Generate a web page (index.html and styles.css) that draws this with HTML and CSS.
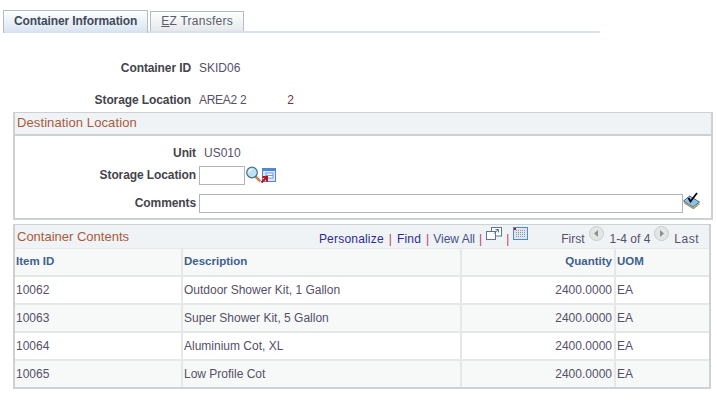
FILE: index.html
```html
<!DOCTYPE html>
<html lang="en">
<head>
    <meta charset="UTF-8">
    <title>Container Information</title>
    <link rel="stylesheet" href="styles.css">
</head>
<body>
    <div class="tabs">
        <div class="tab active">Container Information</div>
        <div class="tab"><u>E</u>Z Transfers</div>
    </div>

    <div class="info">
        <div class="row">
            <span class="label">Container ID</span>
            <span class="value">SKID06</span>
        </div>
        <div class="row">
            <span class="label">Storage Location</span>
            <span class="value area">AREA2 2</span>
            <span class="value extra">2</span>
        </div>
    </div>

    <div class="group">
        <div class="group-head">Destination Location</div>
        <div class="group-body">
            <div class="row unit-row">
                <span class="label">Unit</span>
                <span class="value unit">US010</span>
            </div>
            <div class="row loc-row">
                <span class="label">Storage Location</span>
                <input class="field short" type="text">
                <svg class="icon-search" width="15" height="16" viewBox="0 0 15 16">
                    <line x1="9" y1="10" x2="13.500" y2="14.500" stroke="#c98a4a" stroke-width="2.600" stroke-linecap="round"/>
                    <circle cx="6" cy="6.500" r="5.300" fill="#bfe0f2" stroke="#3f7390" stroke-width="1.200"/>
                    <path d="M3 6.500a3 3 0 0 1 3-3" fill="none" stroke="#fff" stroke-width="1.200"/>
                </svg>
                <svg class="icon-lookup" width="15" height="15" viewBox="0 0 15 15">
                    <rect x="1.500" y="0.500" width="13" height="13" fill="#dbe7f7" stroke="#4f86d6"/>
                    <rect x="2" y="1" width="12" height="2" fill="#4f86d6"/>
                    <rect x="5" y="5" width="7" height="5" fill="#fff" stroke="#6f9be0"/>
                    <line x1="5" y1="7.500" x2="12" y2="7.500" stroke="#6f9be0"/>
                    <path d="M0.500 14.500l4.500-4.500M1.500 9h4.500v4.500" fill="none" stroke="#c00d1e" stroke-width="2"/>
                </svg>
            </div>
            <div class="row comment-row">
                <span class="label">Comments</span>
                <input class="field long" type="text">
                <svg class="icon-spell" width="17" height="17" viewBox="0 0 17 17">
                    <path d="M0.500 9l6-5 10 6-6.500 5z" fill="#8fbfe6" stroke="#41688c"/>
                    <path d="M1 10.500l9.500 6 6-5" fill="none" stroke="#a89a6a" stroke-width="1.500"/>
                    <path d="M5.500 6l2 3.500L14 1" fill="none" stroke="#000" stroke-width="1.800"/>
                </svg>
            </div>
        </div>
    </div>

    <div class="grid-box">
        <div class="grid-head">
            <span class="grid-title">Container Contents</span>
            <div class="grid-nav">
                <a class="link">Personalize</a><span class="sep wide">|</span>
                <a class="link">Find</a><span class="sep find-sep">|</span>
                <a class="link viewall">View All</a><span class="sep">|</span>
                <svg class="icon-zoom" width="16" height="13" viewBox="0 0 16 13">
                    <rect x="5.500" y="0.500" width="10" height="8.500" fill="#fff" stroke="#5a7894"/>
                    <rect x="0.500" y="4.500" width="9" height="8" fill="#fff" stroke="#5a7894"/>
                    <path d="M8 6.500l4-3.500M9.500 2.500h3v3" fill="none" stroke="#5a7894"/>
                </svg>
                <span class="sep">|</span>
                <svg class="icon-dl" width="15" height="13" viewBox="0 0 15 13">
                    <rect x="0.500" y="0.500" width="14" height="12" fill="#dfe6f2" stroke="#4f86d6"/>
                    <path d="M3 3.500h10M3 5.500h10M3 7.500h10M3 9.500h10" stroke="#8c95a3" stroke-dasharray="1 1"/>
                    <rect x="1" y="1" width="2" height="2" fill="#c00d1e"/>
                </svg>
                <span class="first">First</span>
                <svg class="icon-nav" width="15" height="15" viewBox="0 0 15 15">
                    <circle cx="7.500" cy="7.500" r="7" fill="#e4e6e6" stroke="#c9cccc"/>
                    <path d="M9 4v7L5 7.500z" fill="#8a8f8f"/>
                </svg>
                <span class="count">1-4 of 4</span>
                <svg class="icon-nav" width="15" height="15" viewBox="0 0 15 15">
                    <circle cx="7.500" cy="7.500" r="7" fill="#e4e6e6" stroke="#c9cccc"/>
                    <path d="M6 4v7l4-3.500z" fill="#8a8f8f"/>
                </svg>
                <span class="last">Last</span>
            </div>
        </div>
        <table class="grid">
            <colgroup>
                <col class="col-id">
                <col class="col-desc">
                <col class="col-qty">
                <col class="col-uom">
            </colgroup>
            <thead>
                <tr>
                    <th>Item ID</th>
                    <th>Description</th>
                    <th class="num">Quantity</th>
                    <th>UOM</th>
                </tr>
            </thead>
            <tbody>
                <tr>
                    <td>10062</td>
                    <td>Outdoor Shower Kit, 1 Gallon</td>
                    <td class="num">2400.0000</td>
                    <td>EA</td>
                </tr>
                <tr>
                    <td>10063</td>
                    <td>Super Shower Kit, 5 Gallon</td>
                    <td class="num">2400.0000</td>
                    <td>EA</td>
                </tr>
                <tr>
                    <td>10064</td>
                    <td>Aluminium Cot, XL</td>
                    <td class="num">2400.0000</td>
                    <td>EA</td>
                </tr>
                <tr>
                    <td>10065</td>
                    <td>Low Profile Cot</td>
                    <td class="num">2400.0000</td>
                    <td>EA</td>
                </tr>
            </tbody>
        </table>
    </div>
</body>
</html>
```

FILE: styles.css
```css
body {
    font-family: "Liberation Sans", Arial, sans-serif;
    font-size: 12px;
    color: #55506a;
    background-color: #ffffff;
    margin: 0;
    overflow: hidden;
}

.tabs {
    display: flex;
    align-items: flex-end;
    width: 597px;
    height: 21px;
    margin: 10px 0 0 3px;
    border-bottom: 2px solid #d6e2f0;
}

.tab {
    height: 19px;
    line-height: 19px;
    padding: 0 10px;
    margin-right: 3px;
    border: 1px solid #b4bcc6;
    border-bottom: none;
    background: linear-gradient(#ffffff, #e6e8ea);
    color: #55606e;
    letter-spacing: 0.25px;
}

.tab.active {
    height: 22px;
    line-height: 21px;
    margin: 0 2px -2px 0;
    background: linear-gradient(#ffffff, #d6e2f0);
    color: #3f4a5c;
    font-weight: bold;
    letter-spacing: -0.1px;
}

.info {
    display: flex;
    flex-direction: column;
    gap: 12px;
    margin: 25px 0 2px;
}

.row {
    display: flex;
    align-items: center;
    height: 20px;
}

.label {
    width: 191px;
    margin-right: 8px;
    text-align: right;
    font-weight: bold;
    letter-spacing: -0.1px;
    color: #44444c;
    flex-shrink: 0;
}

.area {
    letter-spacing: -0.3px;
}

.extra {
    margin-left: 41px;
    color: #7a3040;
}

.group {
    width: 700px;
    height: 108px;
    margin-left: 13px;
    border: 2px solid #cdd1d4;
    border-top-width: 1px;
    box-sizing: border-box;
}

.group-head {
    height: 21px;
    line-height: 19px;
    padding-left: 2px;
    font-size: 13px;
    letter-spacing: 0.1px;
    background-color: #f0f3f5;
    border-bottom: 2px solid #cdd1d4;
    color: #a85a3c;
}

.group-body {
    padding-top: 7px;
}

.group-body .label {
    width: 181px;
    margin-right: 3px;
}

.unit {
    margin-left: 5px;
}

.loc-row {
    margin-top: 2px;
}

.comment-row {
    margin-top: 8px;
}

.field {
    height: 19px;
    padding: 0;
    margin: 0;
    border: 1px solid #b4b4b4;
    background-color: #ffffff;
    box-sizing: border-box;
}

.short {
    width: 46px;
}

.long {
    width: 484px;
}

.icon-search {
    margin: -2px 0 0 1px;
}

.icon-spell {
    margin-top: -5px;
}

.grid-box {
    width: 698px;
    margin: 4px 0 0 13px;
    border: 2px solid #cdd1d4;
    border-top-width: 1px;
    box-sizing: border-box;
}

.grid-head {
    display: flex;
    justify-content: space-between;
    align-items: center;
    height: 23px;
    padding-left: 2px;
    background-color: #f0f3f5;
}

.grid-title {
    font-size: 13px;
    color: #a85a3c;
}

.grid-nav {
    display: flex;
    align-items: center;
    padding: 4px 10px 0 0;
    color: #55506a;
}

.link {
    color: #2c2c94;
    letter-spacing: 0.2px;
}

.viewall {
    color: #45508a;
    letter-spacing: 0;
}

.sep {
    margin: 0 4px;
    color: #c03a6a;
}

.sep.wide {
    margin: 0 5px;
}

.sep.find-sep {
    margin: 0 4px 0 5px;
}

.first {
    margin: 0 4px 0 33px;
}

.count {
    margin: 0 4px 0 6px;
}

.last {
    margin-left: 5px;
    letter-spacing: 0.5px;
}

.icon-zoom,
.icon-dl,
.icon-nav {
    margin-top: -10px;
}

.grid {
    width: 100%;
    table-layout: fixed;
    border-collapse: collapse;
}

.col-id {
    width: 167px;
}

.col-desc {
    width: 279px;
}

.col-qty {
    width: 154px;
}

.grid th {
    height: 24px;
    padding: 0 2px 2px 1px;
    text-align: left;
    font-size: 11.5px;
    font-weight: bold;
    color: #3f5f8f;
    background-color: #f7f8f8;
    border-left: 2px solid #e6e8e8;
    border-top: 1px solid #e6e8e8;
    border-bottom: 2px solid #e6e8e8;
}

.grid td {
    height: 26px;
    padding: 0 2px 0 1px;
    border-left: 2px solid #e6e8e8;
    border-bottom: 2px solid #e6e8e8;
}

.grid th:first-child,
.grid td:first-child {
    border-left: none;
}

.grid tr:last-child td {
    border-bottom: none;
}

.grid tbody tr:nth-child(even) td {
    background-color: #f7f8f8;
}

.grid .num {
    text-align: right;
}
```
